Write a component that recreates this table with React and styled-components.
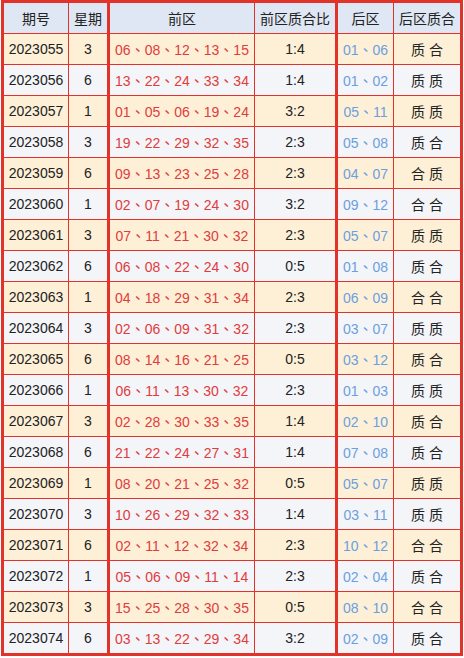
import React from "react";
import styled, { createGlobalStyle } from "styled-components";

const GlobalStyle = createGlobalStyle`
  body {
    margin: 0;
    background: #ffffff;
    font-family: "Liberation Sans", "Noto Sans CJK SC", sans-serif;
  }
`;

const Wrap = styled.div`
  padding-left: 1px;
`;

const Table = styled.table`
  border-collapse: separate;
  border-spacing: 0;
  table-layout: fixed;
  border: 3px solid #e2332a;
  font-size: 14px;
  color: #222;
`;

const Cell = styled.td`
  height: 30px;
  padding: 0;
  text-align: center;
  vertical-align: middle;
  white-space: nowrap;
  background: ${(p) => (p.$head ? "#dfe7f4" : p.$odd ? "#fdf0d7" : "#f4f5f9")};
  border-right: ${(p) => (p.$last ? "none" : p.$thick ? "3px solid #e2332a" : "1px solid #e2332a")};
  border-bottom: ${(p) => (p.$bottom ? "none" : "1px solid #e2332a")};
  color: ${(p) => (p.$tone === "red" ? "#e03c3c" : p.$tone === "blue" ? "#6a9fe0" : "#222")};
  font-family: ${(p) =>
    p.$tone ? '"Liberation Sans", "Noto Sans CJK TC", sans-serif' : "inherit"};
  font-weight: normal;
`;

const cols = [
  { w: 64 },
  { w: 38, thick: true },
  { w: 144 },
  { w: 80, thick: true },
  { w: 55 },
  { w: 66, last: true },
];

const rows = [
  ["2023055", "3", "06、08、12、13、15", "1:4", "01、06", "质 合"],
  ["2023056", "6", "13、22、24、33、34", "1:4", "01、02", "质 质"],
  ["2023057", "1", "01、05、06、19、24", "3:2", "05、11", "质 质"],
  ["2023058", "3", "19、22、29、32、35", "2:3", "05、08", "质 合"],
  ["2023059", "6", "09、13、23、25、28", "2:3", "04、07", "合 质"],
  ["2023060", "1", "02、07、19、24、30", "3:2", "09、12", "合 合"],
  ["2023061", "3", "07、11、21、30、32", "2:3", "05、07", "质 质"],
  ["2023062", "6", "06、08、22、24、30", "0:5", "01、08", "质 合"],
  ["2023063", "1", "04、18、29、31、34", "2:3", "06、09", "合 合"],
  ["2023064", "3", "02、06、09、31、32", "2:3", "03、07", "质 质"],
  ["2023065", "6", "08、14、16、21、25", "0:5", "03、12", "质 合"],
  ["2023066", "1", "06、11、13、30、32", "2:3", "01、03", "质 质"],
  ["2023067", "3", "02、28、30、33、35", "1:4", "02、10", "质 合"],
  ["2023068", "6", "21、22、24、27、31", "1:4", "07、08", "质 合"],
  ["2023069", "1", "08、20、21、25、32", "0:5", "05、07", "质 质"],
  ["2023070", "3", "10、26、29、32、33", "1:4", "03、11", "质 质"],
  ["2023071", "6", "02、11、12、32、34", "2:3", "10、12", "合 合"],
  ["2023072", "1", "05、06、09、11、14", "2:3", "02、04", "质 合"],
  ["2023073", "3", "15、25、28、30、35", "0:5", "08、10", "合 合"],
  ["2023074", "6", "03、13、22、29、34", "3:2", "02、09", "质 合"],
];

const heads = ["期号", "星期", "前区", "前区质合比", "后区", "后区质合"];
const tones = [null, null, "red", null, "blue", null];

export default function App() {
  return (
    <Wrap>
      <GlobalStyle />
      <Table>
        <colgroup>
          {cols.map((c, i) => (
            <col key={i} style={{ width: c.w + (c.last ? 0 : c.thick ? 3 : 1) }} />
          ))}
        </colgroup>
        <thead>
          <tr>
            {heads.map((h, i) => (
              <Cell as="th" key={h} $head $thick={cols[i].thick} $last={cols[i].last}>
                {h}
              </Cell>
            ))}
          </tr>
        </thead>
        <tbody>
          {rows.map((r, ri) => (
            <tr key={r[0]}>
              {r.map((v, i) => (
                <Cell
                  key={i}
                  $odd={ri % 2 === 0}
                  $thick={cols[i].thick}
                  $last={cols[i].last}
                  $bottom={ri === rows.length - 1}
                  $tone={tones[i]}
                >
                  {v}
                </Cell>
              ))}
            </tr>
          ))}
        </tbody>
      </Table>
    </Wrap>
  );
}
